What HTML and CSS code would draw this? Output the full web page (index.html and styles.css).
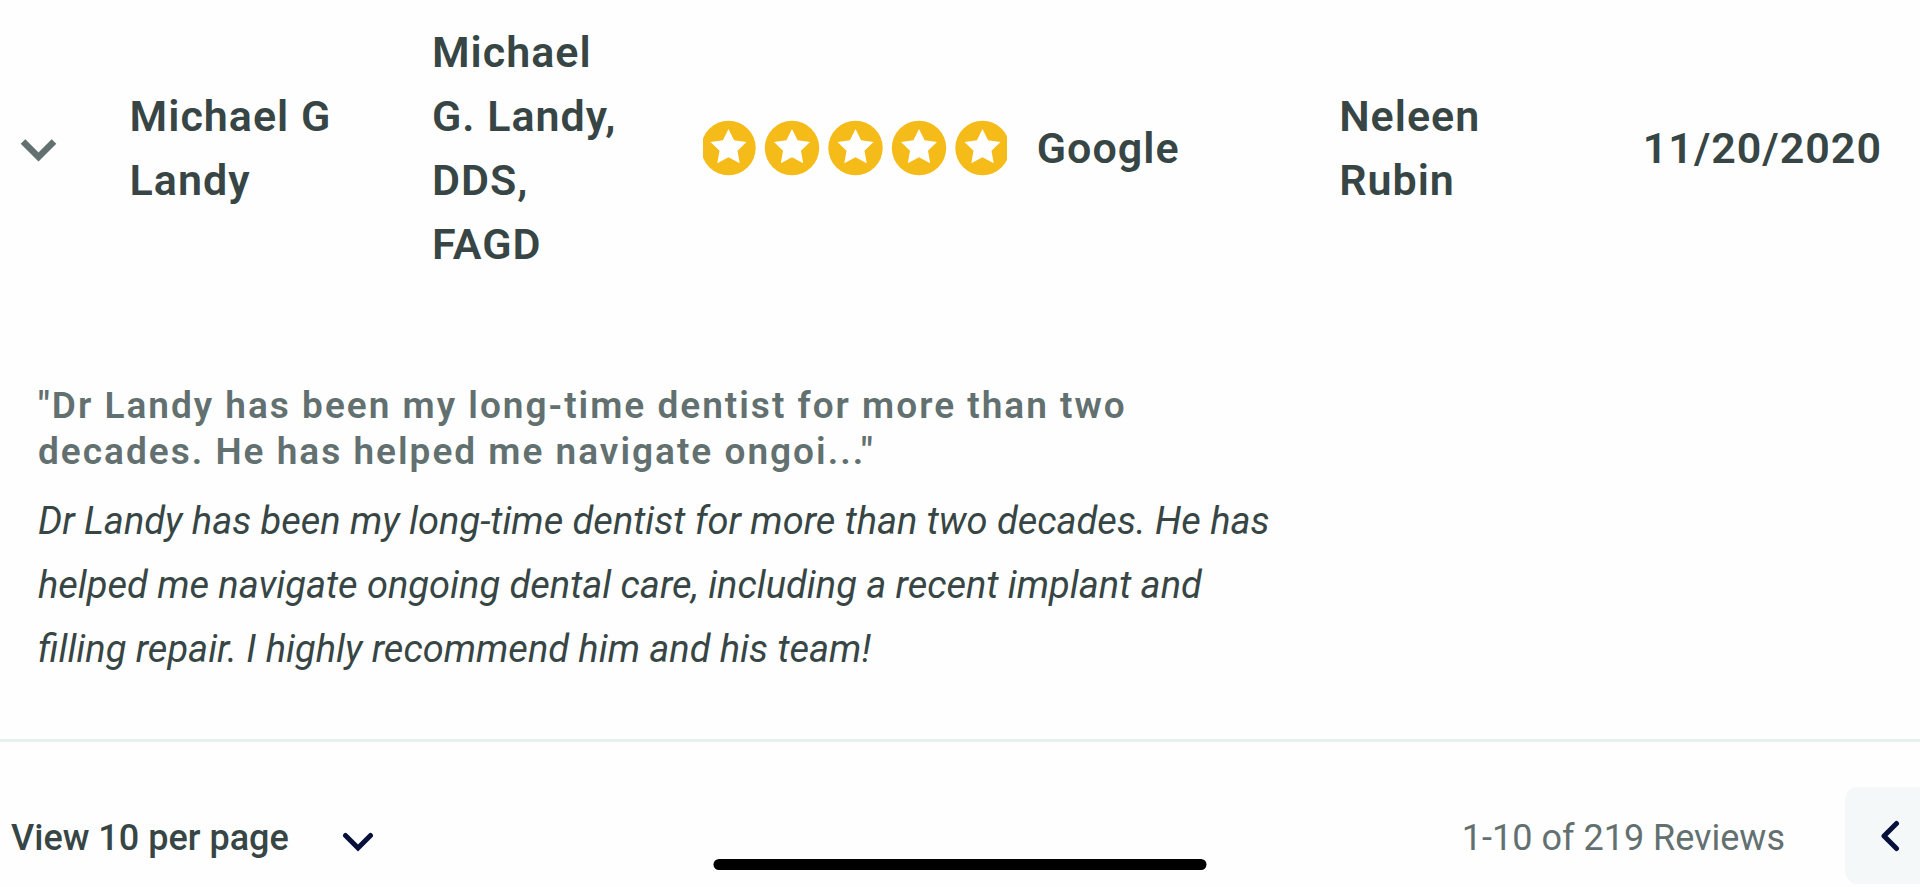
FILE: index.html
```html
<!DOCTYPE html>
<html lang="en">
<head>
  <meta charset="UTF-8" />
  <meta name="viewport" content="width=device-width, initial-scale=1.0"/>
  <title>Reviews</title>
  <link rel="stylesheet" href="styles.css">
</head>
<body>
  <table class="reviews">
    <colgroup>
      <col class="col-toggle">
      <col class="col-name">
      <col class="col-location">
      <col class="col-rating">
      <col class="col-source">
      <col class="col-reviewer">
      <col>
    </colgroup>
    <tbody>
      <tr class="review-row">
        <td class="toggle-cell">
          <button class="toggle" type="button" aria-label="Toggle review" aria-expanded="true">
            <svg width="38" height="24" viewBox="0 0 38 24"><path d="M3 2.5L18.5 18L34 2.5" fill="none" stroke="#627070" stroke-width="6.5"/></svg>
          </button>
        </td>
        <td>Michael G Landy</td>
        <td>Michael G. Landy, DDS, FAGD</td>
        <td class="rating-cell">
          <svg class="stars" width="304" height="56" viewBox="0 0 304 56" role="img" aria-label="5 out of 5 stars">
            <defs>
              <g id="star">
                <circle cx="0" cy="28" r="27.2" fill="#f5bb18"/>
                <path d="M0 9L5.6 20.2L18 22L9 30.8L11.2 43.2L0 37.2L-11.2 43.2L-9 30.8L-18 22L-5.6 20.2Z" fill="#fff"/>
              </g>
            </defs>
            <use href="#star" x="25.5"/>
            <use href="#star" x="89"/>
            <use href="#star" x="152.5"/>
            <use href="#star" x="216"/>
            <use href="#star" x="279.5"/>
          </svg>
        </td>
        <td>Google</td>
        <td>Neleen Rubin</td>
        <td class="date-cell">11/20/2020</td>
      </tr>
      <tr>
        <td class="detail" colspan="7">
          <h2 class="detail-title">"Dr Landy has been my long-time dentist for more than two decades. He has helped me navigate ongoi..."</h2>
          <p class="detail-text">Dr Landy has been my long-time dentist for more than two decades. He has helped me navigate ongoing dental care, including a recent implant and filling repair. I highly recommend him and his team!</p>
        </td>
      </tr>
    </tbody>
  </table>

  <div class="pager">
    <div class="per-page">
      <select class="per-page-select" aria-label="Reviews per page">
        <option>View 10 per page</option>
        <option>View 25 per page</option>
        <option>View 50 per page</option>
      </select>
      <svg class="per-page-arrow" width="32" height="20" viewBox="0 0 32 20"><path d="M3.5 3.5L16 16L28.5 3.5" fill="none" stroke="#07103a" stroke-width="5" stroke-linecap="round"/></svg>
    </div>
    <span class="count">1-10 of 219 Reviews</span>
    <button class="prev" type="button" aria-label="Previous page">
      <svg width="20" height="32" viewBox="0 0 20 32"><path d="M16.5 3.5L4 16L16.5 28.5" fill="none" stroke="#07103a" stroke-width="5" stroke-linecap="round" stroke-linejoin="round"/></svg>
    </button>
  </div>

  <div class="home-bar"></div>
</body>
</html>
```

FILE: styles.css
```css
body {
  margin: 0;
  background-color: #fefefe;
  color: #374645;
  font-family: Roboto, sans-serif;
  font-size: 36px;
}

button {
  border: none;
  padding: 0;
  background: none;
  cursor: pointer;
}

svg {
  display: block;
}

.reviews {
  width: 100%;
  table-layout: fixed;
  border-collapse: collapse;
  border-bottom: 3px solid #e4efef;
}

.col-toggle {
  width: 6.75%;
}

.col-name,
.col-source,
.col-reviewer {
  width: 15.75%;
}

.col-location {
  width: 14.1%;
}

.col-rating {
  width: 17.4%;
}

.review-row td {
  padding: 20px 72px 22px 0;
  font-size: 43px;
  font-weight: 600;
  line-height: 64px;
  letter-spacing: 1px;
  vertical-align: middle;
}

.review-row .toggle-cell {
  padding-left: 20px;
  padding-right: 0;
}

.review-row .rating-cell {
  padding-right: 0;
}

.review-row .date-cell {
  padding-right: 38px;
  text-align: right;
  white-space: nowrap;
}

.detail {
  padding: 85px 38px 58px;
}

.detail-title {
  max-width: 1200px;
  margin: 0 0 14px;
  color: #627070;
  font-size: 37px;
  font-weight: 600;
  line-height: 46px;
  letter-spacing: 2px;
}

.detail-text {
  max-width: 1260px;
  margin: 0;
  font-size: 38px;
  font-style: italic;
  line-height: 64px;
}

.pager {
  display: flex;
  align-items: flex-end;
  padding: 45px 0 3px 11px;
  overflow: hidden;
}

.per-page {
  position: relative;
  margin-right: auto;
}

.per-page-select {
  appearance: none;
  border: none;
  padding: 0 85px 0 0;
  background: none;
  color: #374645;
  font-family: inherit;
  font-size: 36px;
  font-weight: 500;
  line-height: 92px;
}

.per-page-arrow {
  position: absolute;
  top: 40px;
  right: 0;
  pointer-events: none;
}

.count {
  margin-right: 60px;
  color: #627070;
  line-height: 92px;
}

.prev {
  display: flex;
  align-items: center;
  justify-content: center;
  box-sizing: border-box;
  width: 97px;
  height: 97px;
  margin-right: -22px;
  padding-right: 8px;
  border-radius: 13px;
  background-color: #f4f8f9;
}

/* phone home indicator */
.home-bar {
  position: fixed;
  bottom: 17px;
  left: 50%;
  width: 493px;
  height: 11px;
  border-radius: 6px;
  background-color: #000;
  transform: translateX(-50%);
}
```
